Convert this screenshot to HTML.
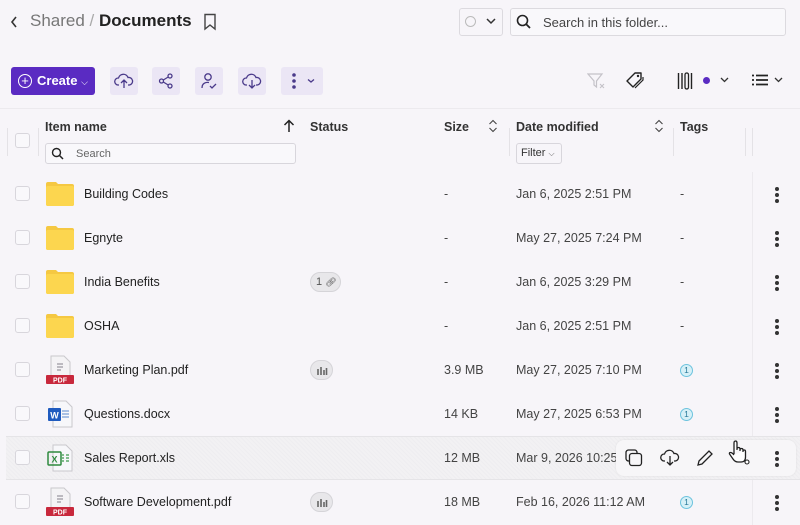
<!DOCTYPE html>
<html><head><meta charset="utf-8"><style>
*{box-sizing:border-box;margin:0;padding:0}
body{width:800px;height:525px;background:#f7f5f9;font-family:"Liberation Sans",sans-serif;color:#222;position:relative;overflow:hidden;font-size:12.5px}
.a{position:absolute}
.btn{position:absolute;top:67px;width:28px;height:28px;background:#ebe6f5;border-radius:3px;display:flex;align-items:center;justify-content:center}
.cb{position:absolute;left:15px;width:15px;height:15px;border:1px solid #d8d6dc;border-radius:3px;background:#f9f8fb}
.row{position:absolute;left:0;width:800px;height:44px}
.row .t{position:absolute;top:0;line-height:44px}
.hd{font-weight:bold;font-size:12.5px;color:#333}
.k{position:absolute;left:775px;width:4px}
.k i{display:block;width:4px;height:4px;border-radius:50%;background:#333;margin-bottom:2px}
.tag{position:absolute;left:680px;width:13px;height:13px;border-radius:50%;background:#d6f0f7;border:1px solid #6cc3de;font-size:8.5px;line-height:11px;text-align:center;color:#2a7a9a}
.st{position:absolute;left:310px;width:23px;height:20px;border-radius:10px;background:#e8e7ea;border:1px solid #d5d4d8}
</style></head><body>
<svg class="a" style="left:9px;top:15px" width="10" height="14"><path d="M7 2 L3 7 L7 12" stroke="#333" stroke-width="1.6" fill="none"/></svg>
<div class="a" style="left:30px;top:11px;font-size:17px;color:#777">Shared <span style="color:#aaa">/</span> <span style="color:#222;font-weight:bold">Documents</span></div>
<svg class="a" style="left:203px;top:13px" width="14" height="18"><path d="M2 1.5 H12 V16 L7 12 L2 16 Z" stroke="#444" stroke-width="1.4" fill="none"/></svg>
<div class="a" style="left:459px;top:8px;width:44px;height:28px;border:1px solid #dcdadf;border-radius:3px;background:#f7f5f9"></div>
<div class="a" style="left:465px;top:16px;width:11px;height:11px;border-radius:50%;border:1px solid #bbb"></div>
<svg class="a" style="left:486px;top:18px" width="10" height="7"><path d="M1 1 L5 5 L9 1" stroke="#333" stroke-width="1.5" fill="none"/></svg>
<div class="a" style="left:510px;top:8px;width:276px;height:28px;border:1px solid #dcdadf;border-radius:3px;background:#f9f8fb"></div>
<svg class="a" style="left:516px;top:14px" width="16" height="16"><circle cx="6.5" cy="6.5" r="5" stroke="#222" stroke-width="1.6" fill="none"/><path d="M10 10 L14 14" stroke="#222" stroke-width="1.8"/></svg>
<div class="a" style="left:543px;top:15px;color:#444;font-size:13px">Search in this folder...</div>
<div class="a" style="left:11px;top:67px;width:84px;height:28px;background:#5a2bc2;border-radius:3px;color:#fff;font-weight:bold;font-size:13px;line-height:28px;padding-left:26px">Create <span style="font-size:9px;font-weight:normal">⌵</span></div>
<div class="a" style="left:18px;top:74px;width:14px;height:14px;border:1.5px solid #fff;border-radius:50%;color:#fff;font-size:13px;line-height:11px;text-align:center">+</div>
<div class="btn" style="left:110px"><svg width="20" height="16"><path d="M5 12 H4 A3.5 3.5 0 0 1 4.5 5 A5 5 0 0 1 14 4.5 A3.5 3.5 0 0 1 15.5 12 H14 M10 15 V7 M7 10 L10 7 L13 10" stroke="#4a3a8a" stroke-width="1.3" fill="none"/></svg></div>
<div class="btn" style="left:152px"><svg width="16" height="16"><circle cx="3.5" cy="8" r="2" stroke="#4a3a8a" stroke-width="1.3" fill="none"/><circle cx="12" cy="3" r="2" stroke="#4a3a8a" stroke-width="1.3" fill="none"/><circle cx="12" cy="13" r="2" stroke="#4a3a8a" stroke-width="1.3" fill="none"/><path d="M5.3 7 L10.2 4 M5.3 9 L10.2 12" stroke="#4a3a8a" stroke-width="1.3"/></svg></div>
<div class="btn" style="left:195px"><svg width="18" height="18"><circle cx="8" cy="5" r="3.2" stroke="#4a3a8a" stroke-width="1.3" fill="none"/><path d="M2 16 C2 11 6 10 9 10.5 M10 14 L12 16 L16 12" stroke="#4a3a8a" stroke-width="1.3" fill="none"/></svg></div>
<div class="btn" style="left:238px"><svg width="20" height="16"><path d="M5 12 H4 A3.5 3.5 0 0 1 4.5 5 A5 5 0 0 1 14 4.5 A3.5 3.5 0 0 1 15.5 12 H14 M10 7 V15 M7 12 L10 15 L13 12" stroke="#4a3a8a" stroke-width="1.3" fill="none"/></svg></div>
<div class="btn" style="left:281px;width:42px;justify-content:flex-start;padding-left:11px"><svg width="28" height="18"><circle cx="2" cy="3" r="1.8" fill="#4a3a8a"/><circle cx="2" cy="9" r="1.8" fill="#4a3a8a"/><circle cx="2" cy="15" r="1.8" fill="#4a3a8a"/><path d="M16 7.5 L19 10 L22 7.5" stroke="#4a3a8a" stroke-width="1.3" fill="none"/></svg></div>
<svg class="a" style="left:587px;top:72px" width="20" height="18"><path d="M1 2 H15 L9.5 9 V15 L7 13 V9 Z" stroke="#c4c2c8" stroke-width="1.2" fill="none"/><path d="M13 12 L17 16 M17 12 L13 16" stroke="#c4c2c8" stroke-width="1.1"/></svg>
<svg class="a" style="left:624px;top:69px" width="22" height="22"><path d="M3 12 L11 4 H17 V10 L9 18 Z" stroke="#222" stroke-width="1.4" fill="none" stroke-linejoin="round"/><circle cx="14" cy="7" r="1.2" fill="#222"/><path d="M19 8 V11 L11 19" stroke="#222" stroke-width="1.2" fill="none"/></svg>
<svg class="a" style="left:677px;top:72px" width="18" height="18"><path d="M1.5 1 V17 M5 1 V17 M14.5 1 V17" stroke="#222" stroke-width="1.4"/><rect x="8" y="1" width="3.5" height="16" rx="1.7" stroke="#222" stroke-width="1.3" fill="none"/></svg>
<div class="a" style="left:703px;top:77px;width:7px;height:7px;border-radius:50%;background:#5a2bc2"></div>
<svg class="a" style="left:720px;top:77px" width="10" height="7"><path d="M1 1 L4.5 4.5 L8 1" stroke="#333" stroke-width="1.3" fill="none"/></svg>
<svg class="a" style="left:752px;top:74px" width="18" height="12"><path d="M0 1.5 H2 M4 1.5 H16 M0 6 H2 M4 6 H16 M0 10.5 H2 M4 10.5 H16" stroke="#222" stroke-width="1.8"/></svg>
<svg class="a" style="left:774px;top:77px" width="10" height="7"><path d="M1 1 L4.5 4.5 L8 1" stroke="#333" stroke-width="1.3" fill="none"/></svg>
<div class="a" style="left:0;top:108px;width:800px;height:1px;background:#eceaee"></div>
<div class="cb" style="top:133px"></div>
<div class="a" style="left:7px;top:128px;width:1px;height:28px;background:#e4e2e6"></div>
<div class="a" style="left:38px;top:128px;width:1px;height:28px;background:#e4e2e6"></div>
<div class="a hd" style="left:45px;top:120px">Item name</div>
<svg class="a" style="left:283px;top:119px" width="12" height="14"><path d="M6 13 V2 M1.5 6 L6 1.5 L10.5 6" stroke="#222" stroke-width="1.5" fill="none"/></svg>
<div class="a" style="left:45px;top:143px;width:251px;height:21px;border:1px solid #d8d6dc;border-radius:3px;background:#f9f8fb"></div>
<svg class="a" style="left:51px;top:147px" width="13" height="13"><circle cx="5.5" cy="5.5" r="4" stroke="#222" stroke-width="1.4" fill="none"/><path d="M8.5 8.5 L12 12" stroke="#222" stroke-width="1.5"/></svg>
<div class="a" style="left:76px;top:148px;font-size:11px;color:#666">Search</div>
<div class="a hd" style="left:310px;top:120px">Status</div>
<div class="a hd" style="left:444px;top:120px">Size</div>
<svg class="a" style="left:488px;top:119px" width="10" height="14"><path d="M1.5 5 L5 1.5 L8.5 5 M1.5 9 L5 12.5 L8.5 9" stroke="#444" stroke-width="1.1" fill="none"/></svg>
<div class="a" style="left:509px;top:128px;width:1px;height:28px;background:#e4e2e6"></div>
<div class="a hd" style="left:516px;top:120px">Date modified</div>
<svg class="a" style="left:654px;top:119px" width="10" height="14"><path d="M1.5 5 L5 1.5 L8.5 5 M1.5 9 L5 12.5 L8.5 9" stroke="#444" stroke-width="1.1" fill="none"/></svg>
<div class="a" style="left:516px;top:143px;width:46px;height:21px;border:1px solid #d8d6dc;border-radius:3px;font-size:11px;line-height:19px;padding-left:4px;color:#333">Filter <span style="font-size:8px;color:#666">⌵</span></div>
<div class="a" style="left:673px;top:128px;width:1px;height:28px;background:#e4e2e6"></div>
<div class="a hd" style="left:680px;top:120px">Tags</div>
<div class="a" style="left:745px;top:128px;width:1px;height:28px;background:#e4e2e6"></div>
<div class="a" style="left:752px;top:128px;width:1px;height:28px;background:#e4e2e6"></div>
<div class="a" style="left:752px;top:172px;width:1px;height:353px;background:#eceaee"></div>
<div class="a" style="left:6px;top:436px;width:794px;height:44px;background:repeating-linear-gradient(45deg,#eeedf0 0 1px,#f2f1f3 1px 3px);border-top:1px solid #e5e4e7;border-bottom:1px solid #e5e4e7"></div>
<div id="rows"></div>
<script>
const folder='<svg width="30" height="26"><path d="M1 3 Q1 1 3 1 H11 L13 3 H27 Q29 3 29 5 V23 Q29 25 27 25 H3 Q1 25 1 23 Z" fill="#f5c842"/><path d="M1 7 Q1 5 3 5 H27 Q29 5 29 7 V23 Q29 25 27 25 H3 Q1 25 1 23 Z" fill="#fcd64f"/></svg>';
const pdf='<svg width="30" height="30"><path d="M6 1 H19 L25 7 V24 H6 Z" fill="#f4f3f5" stroke="#c9c8cc"/><path d="M12 9 H18 M12 12 H18 M12 15 H16" stroke="#9a99a0" stroke-width="1.2"/><rect x="1" y="20" width="28" height="9" rx="1" fill="#c8283c"/><text x="15" y="27.5" font-size="7" fill="#fff" text-anchor="middle" font-family="Liberation Sans" font-weight="bold">PDF</text></svg>';
const doc='<svg width="30" height="30"><path d="M8 2 H21 L27 8 V28 H8 Z" fill="#f7f7fa" stroke="#c9c8cc"/><path d="M17 12 H24 M17 15 H24 M17 18 H24" stroke="#7aa0d8" stroke-width="1.2"/><rect x="3" y="9" width="13" height="13" rx="1" fill="#1f5bbf"/><text x="9.5" y="19.5" font-size="9" fill="#fff" text-anchor="middle" font-family="Liberation Sans" font-weight="bold">W</text></svg>';
const xls='<svg width="30" height="30"><path d="M8 2 H21 L27 8 V28 H8 Z" fill="#f7f7fa" stroke="#c9c8cc"/><path d="M17 12 H19 M21 12 H24 M17 15 H19 M21 15 H24 M17 18 H19 M21 18 H24" stroke="#3c9a4e" stroke-width="1.2"/><rect x="3" y="9" width="13" height="13" rx="1" fill="none" stroke="#2e8a3e" stroke-width="1.5"/><text x="9.5" y="19.5" font-size="9" fill="#2e8a3e" text-anchor="middle" font-family="Liberation Sans" font-weight="bold">X</text></svg>';
const bars='<svg width="12" height="10" style="position:absolute;left:5px;top:4px"><path d="M2 4 V10 M5 2 V10 M8 5 V10 M10.5 3 V10" stroke="#666" stroke-width="1.6"/></svg>';
const R=[
['Building Codes',folder,'','-','Jan 6, 2025 2:51 PM','-'],
['Egnyte',folder,'','-','May 27, 2025 7:24 PM','-'],
['India Benefits',folder,'link','-','Jan 6, 2025 3:29 PM','-'],
['OSHA',folder,'','-','Jan 6, 2025 2:51 PM','-'],
['Marketing Plan.pdf',pdf,'bars','3.9 MB','May 27, 2025 7:10 PM','1'],
['Questions.docx',doc,'','14 KB','May 27, 2025 6:53 PM','1'],
['Sales Report.xls',xls,'','12 MB','Mar 9, 2026 10:25 AM',''],
['Software Development.pdf',pdf,'bars','18 MB','Feb 16, 2026 11:12 AM','1']];
let h='';
R.forEach((r,i)=>{const y=172+i*44;
h+=`<div class="row" style="top:${y}px"><div class="cb" style="top:14px"></div><div class="a" style="left:45px;top:${r[1]===folder?9:7}px">${r[1]}</div><div class="t" style="left:84px">${r[0]}</div>`;
if(r[2]=='link')h+=`<div class="st" style="top:12px;width:31px;font-size:11px;line-height:18px;padding-left:5px;color:#555">1 <span style="font-size:9px">🔗︎</span></div>`;
if(r[2]=='bars')h+=`<div class="st" style="top:12px">${bars}</div>`;
h+=`<div class="t" style="left:444px;color:#444">${r[3]}</div><div class="t" style="left:516px;color:#444">${r[4]}</div>`;
if(r[5]=='-')h+=`<div class="t" style="left:680px;color:#444">-</div>`;
if(r[5]=='1')h+=`<div class="tag" style="top:16px">1</div>`;
if(i!=6)h+=`<div class="k" style="top:15px"><i></i><i></i><i></i></div>`;
h+=`</div>`;});
document.getElementById('rows').innerHTML=h;
</script>
<div class="a" style="left:616px;top:440px;width:180px;height:36px;background:#f7f6f8;border-radius:8px;box-shadow:0 0 2px rgba(0,0,0,0.08)"></div>
<svg class="a" style="left:625px;top:449px" width="18" height="18"><rect x="1" y="1" width="11" height="11" rx="2.5" stroke="#222" stroke-width="1.3" fill="none"/><rect x="4.5" y="4.5" width="12" height="12" rx="2.5" stroke="#222" stroke-width="1.3" fill="#f7f6f8"/></svg>
<svg class="a" style="left:659px;top:449px" width="22" height="18"><path d="M6 12 H5 A3.5 3.5 0 0 1 5.5 5 A5 5 0 0 1 15 4.5 A3.5 3.5 0 0 1 16.5 12 H15 M11 7 V16 M8 13 L11 16 L14 13" stroke="#222" stroke-width="1.3" fill="none"/></svg>
<svg class="a" style="left:696px;top:449px" width="18" height="18"><path d="M2 16 L3 12 L13 2 L16 5 L6 15 Z" stroke="#222" stroke-width="1.3" fill="none"/></svg>
<div class="k" style="top:451px"><i></i><i></i><i></i></div>
<svg class="a" style="left:727px;top:440px" width="24" height="26"><path d="M7 14 V3 Q7 1 8.5 1 Q10 1 10 3 V10 M10 9 Q10 7.5 11.5 7.5 Q13 7.5 13 9 V11 M13 10 Q13 8.5 14.5 8.5 Q16 8.5 16 10 V12 M16 11 Q16 10 17.3 10 Q18.5 10 18.5 11.5 V17 Q18.5 22 14 22 H11 Q8 22 6 19 L2.5 14 Q2 12.5 3.5 12.5 Q5 12.5 7 15" stroke="#222" stroke-width="1.3" fill="#fff"/><circle cx="20" cy="22" r="2" stroke="#222" stroke-width="1.1" fill="#fff"/></svg>
</body></html>
